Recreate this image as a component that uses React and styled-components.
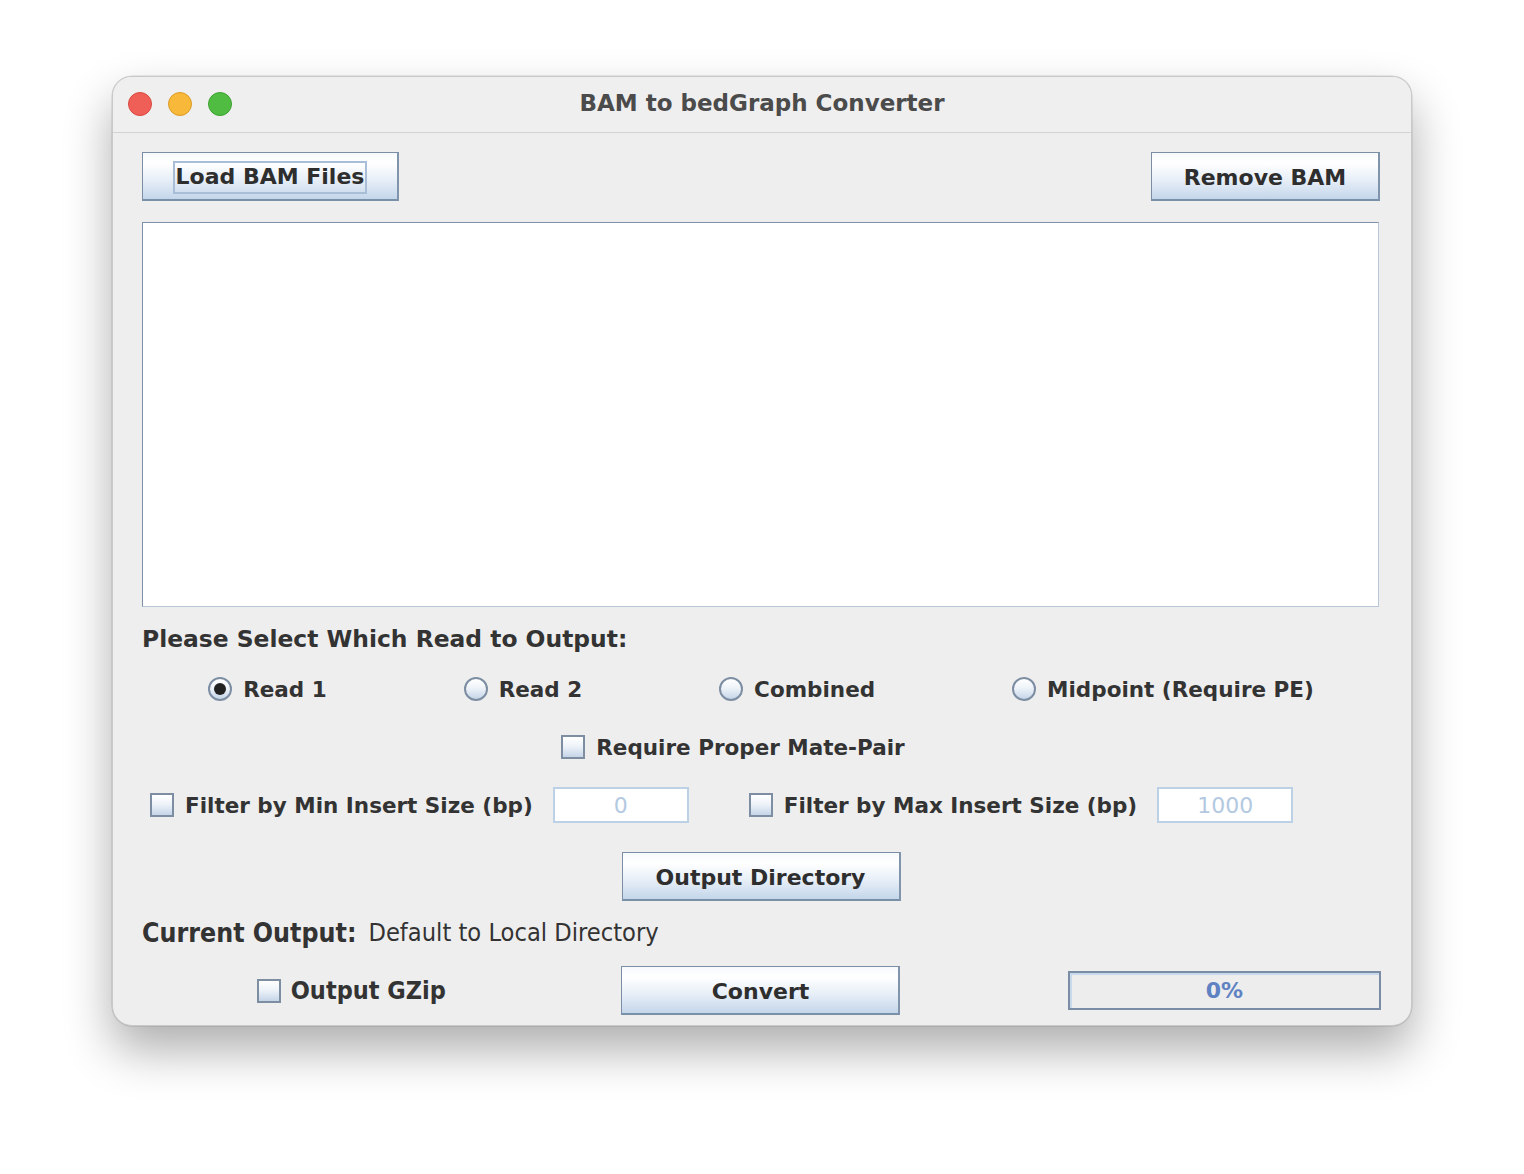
import React, { useState } from "react";
import styled, { createGlobalStyle } from "styled-components";

const GlobalStyle = createGlobalStyle`
  html, body {
    margin: 0;
    padding: 0;
    background: #ffffff;
  }
  body {
    font-family: "DejaVu Sans", "Noto Sans", sans-serif;
  }
`;

const Page = styled.div`
  width: 1524px;
  height: 1174px;
  display: flex;
  justify-content: center;
  align-items: flex-start;
  padding-top: 76px;
  box-sizing: border-box;
`;

const Window = styled.div`
  width: 1300px;
  height: 950px;
  box-sizing: border-box;
  border-radius: 20px;
  border: 1px solid #c9c9c9;
  background: #eeeeee;
  box-shadow: 0 24px 48px rgba(0, 0, 0, 0.32), 0 0 0 0.5px rgba(0, 0, 0, 0.15);
  overflow: hidden;
  display: flex;
  flex-direction: column;
`;

const TitleBar = styled.div`
  height: 56px;
  flex: none;
  box-sizing: border-box;
  border-bottom: 1px solid #d3d3d3;
  background: #efefef;
  display: flex;
  align-items: center;
  position: relative;
  padding-left: 15px;
  padding-bottom: 2px;
  gap: 16px;
`;

const Light = styled.span`
  width: 24px;
  height: 24px;
  border-radius: 50%;
  box-sizing: border-box;
  background: ${(p) => p.color};
  border: 1px solid ${(p) => p.edge};
`;

const Title = styled.div`
  position: absolute;
  left: 0;
  right: 0;
  top: 0;
  bottom: 4px;
  display: flex;
  align-items: center;
  justify-content: center;
  font-weight: bold;
  font-size: 23px;
  color: #4b4b4b;
  pointer-events: none;
`;

const Content = styled.div`
  flex: 1;
  padding: 0 31px 0 29px;
  display: flex;
  flex-direction: column;
`;

const TopRow = styled.div`
  margin-top: 19px;
  height: 49px;
  display: flex;
  justify-content: space-between;
  align-items: stretch;
`;

const Button = styled.button`
  width: ${(p) => p.w}px;
  height: 49px;
  box-sizing: border-box;
  border: 1px solid #7c8ea5;
  border-bottom: 2px solid #7890a8;
  border-right: 2px solid #8094ab;
  background: linear-gradient(to bottom, #f6f9fc 0%, #ffffff 22%, #e6eef7 60%, #c4d6ea 100%);
  font-family: "DejaVu Sans", sans-serif;
  font-weight: bold;
  font-size: 22px;
  color: #2e2e2e;
  display: flex;
  align-items: center;
  justify-content: center;
  padding: 2px 0 0 0;
  cursor: default;
`;

const Focus = styled.span`
  border: 2px solid #a8bdd6;
  padding: 1px 1px 2px 1px;
  line-height: 26px;
`;

const ListBox = styled.div`
  margin-top: 21px;
  height: 385px;
  width: 1237px;
  box-sizing: border-box;
  background: #ffffff;
  border: 1px solid #b9c6d6;
  border-top-color: #7f91a9;
  border-left-color: #7f91a9;
`;

const Heading = styled.div`
  height: 64px;
  display: flex;
  align-items: center;
  font-weight: bold;
  font-size: 23.4px;
  color: #333333;
`;

const RadioRow = styled.div`
  height: 36px;
  display: flex;
  justify-content: center;
  align-items: center;
  gap: 137px;
`;

const Choice = styled.label`
  display: flex;
  align-items: center;
  gap: 11px;
  font-weight: bold;
  font-size: 21.5px;
  color: #333333;
  white-space: nowrap;
`;

const RadioDot = styled.span`
  width: 24px;
  height: 24px;
  box-sizing: border-box;
  border-radius: 50%;
  border: 2px solid #7d8ea3;
  background: linear-gradient(to bottom, #ffffff 0%, #eef3f9 45%, #c5d5e8 100%);
  display: flex;
  align-items: center;
  justify-content: center;
  &::after {
    content: "";
    width: 12px;
    height: 12px;
    border-radius: 50%;
    background: #222222;
    display: ${(p) => (p.checked ? "block" : "none")};
  }
`;

const Box = styled.span`
  width: 24px;
  height: 24px;
  flex: none;
  box-sizing: border-box;
  border: 2px solid #7d8ea3;
  background: linear-gradient(to bottom, #ffffff 0%, #eef3f9 45%, #c5d5e8 100%);
`;

const MateRow = styled.div`
  height: 80px;
  display: flex;
  align-items: center;
  justify-content: center;
  padding-right: 56px;
`;

const FilterRow = styled.div`
  height: 36px;
  display: flex;
  align-items: center;
  padding-left: 8px;
`;

const Field = styled.div`
  width: 136px;
  height: 36px;
  box-sizing: border-box;
  margin-left: 20px;
  margin-right: ${(p) => p.after || 0}px;
  background: #ffffff;
  border: 2px solid #bcd0e6;
  display: flex;
  align-items: center;
  justify-content: center;
  font-size: 22px;
  color: #b3c9e1;
`;

const CenterRow = styled.div`
  margin-top: 29px;
  display: flex;
  justify-content: center;
`;

const OutputLine = styled.div`
  height: 62px;
  display: flex;
  align-items: center;
  gap: 12px;
  color: #333333;
  font-family: "DejaVu Sans Condensed", "DejaVu Sans", sans-serif;
  font-stretch: condensed;
`;

const OutputLabel = styled.span`
  font-weight: bold;
  font-size: 26.5px;
`;

const OutputValue = styled.span`
  font-size: 25.2px;
`;

const BottomRow = styled.div`
  margin-top: 3px;
  display: grid;
  grid-template-columns: 1fr 1fr 1fr;
  align-items: center;
`;

const Cell = styled.div`
  display: flex;
  justify-content: ${(p) => p.justify || "center"};
  margin-right: ${(p) => p.mr || 0}px;
`;

const GzipLabel = styled(Choice)`
  font-family: "DejaVu Sans Condensed", "DejaVu Sans", sans-serif;
  font-stretch: condensed;
  font-size: 25px;
  gap: 10px;
  margin-left: 6px;
`;

const Progress = styled.div`
  width: 313px;
  height: 39px;
  box-sizing: border-box;
  border: 2px solid #7b8da4;
  background: #ededed;
  box-shadow: inset 2px 2px 0 #c9d9ec;
  display: flex;
  align-items: center;
  justify-content: center;
  font-weight: bold;
  font-size: 22px;
  color: #5f82c3;
`;

const radios = ["Read 1", "Read 2", "Combined", "Midpoint (Require PE)"];

export default function App() {
  const [read, setRead] = useState(0);

  return (
    <>
      <GlobalStyle />
      <Page>
        <Window>
          <TitleBar>
            <Light color="#ef5f57" edge="#d9483f" />
            <Light color="#f8b83a" edge="#dc9b27" />
            <Light color="#50bd42" edge="#3ea031" />
            <Title>BAM to bedGraph Converter</Title>
          </TitleBar>
          <Content>
            <TopRow>
              <Button w={257}>
                <Focus>Load BAM Files</Focus>
              </Button>
              <Button w={229}>Remove BAM</Button>
            </TopRow>
            <ListBox />
            <Heading>Please Select Which Read to Output:</Heading>
            <RadioRow>
              {radios.map((r, i) => (
                <Choice key={r} onClick={() => setRead(i)}>
                  <RadioDot checked={read === i} />
                  {r}
                </Choice>
              ))}
            </RadioRow>
            <MateRow>
              <Choice>
                <Box />
                Require Proper Mate-Pair
              </Choice>
            </MateRow>
            <FilterRow>
              <Choice>
                <Box />
                Filter by Min Insert Size (bp)
              </Choice>
              <Field after={60}>0</Field>
              <Choice>
                <Box />
                Filter by Max Insert Size (bp)
              </Choice>
              <Field>1000</Field>
            </FilterRow>
            <CenterRow>
              <Button w={279}>Output Directory</Button>
            </CenterRow>
            <OutputLine>
              <OutputLabel>Current Output:</OutputLabel>
              <OutputValue>Default to Local Directory</OutputValue>
            </OutputLine>
            <BottomRow>
              <Cell>
                <GzipLabel>
                  <Box />
                  Output GZip
                </GzipLabel>
              </Cell>
              <Cell>
                <Button w={279}>Convert</Button>
              </Cell>
              <Cell justify="flex-end" mr={-1}>
                <Progress>0%</Progress>
              </Cell>
            </BottomRow>
          </Content>
        </Window>
      </Page>
    </>
  );
}
